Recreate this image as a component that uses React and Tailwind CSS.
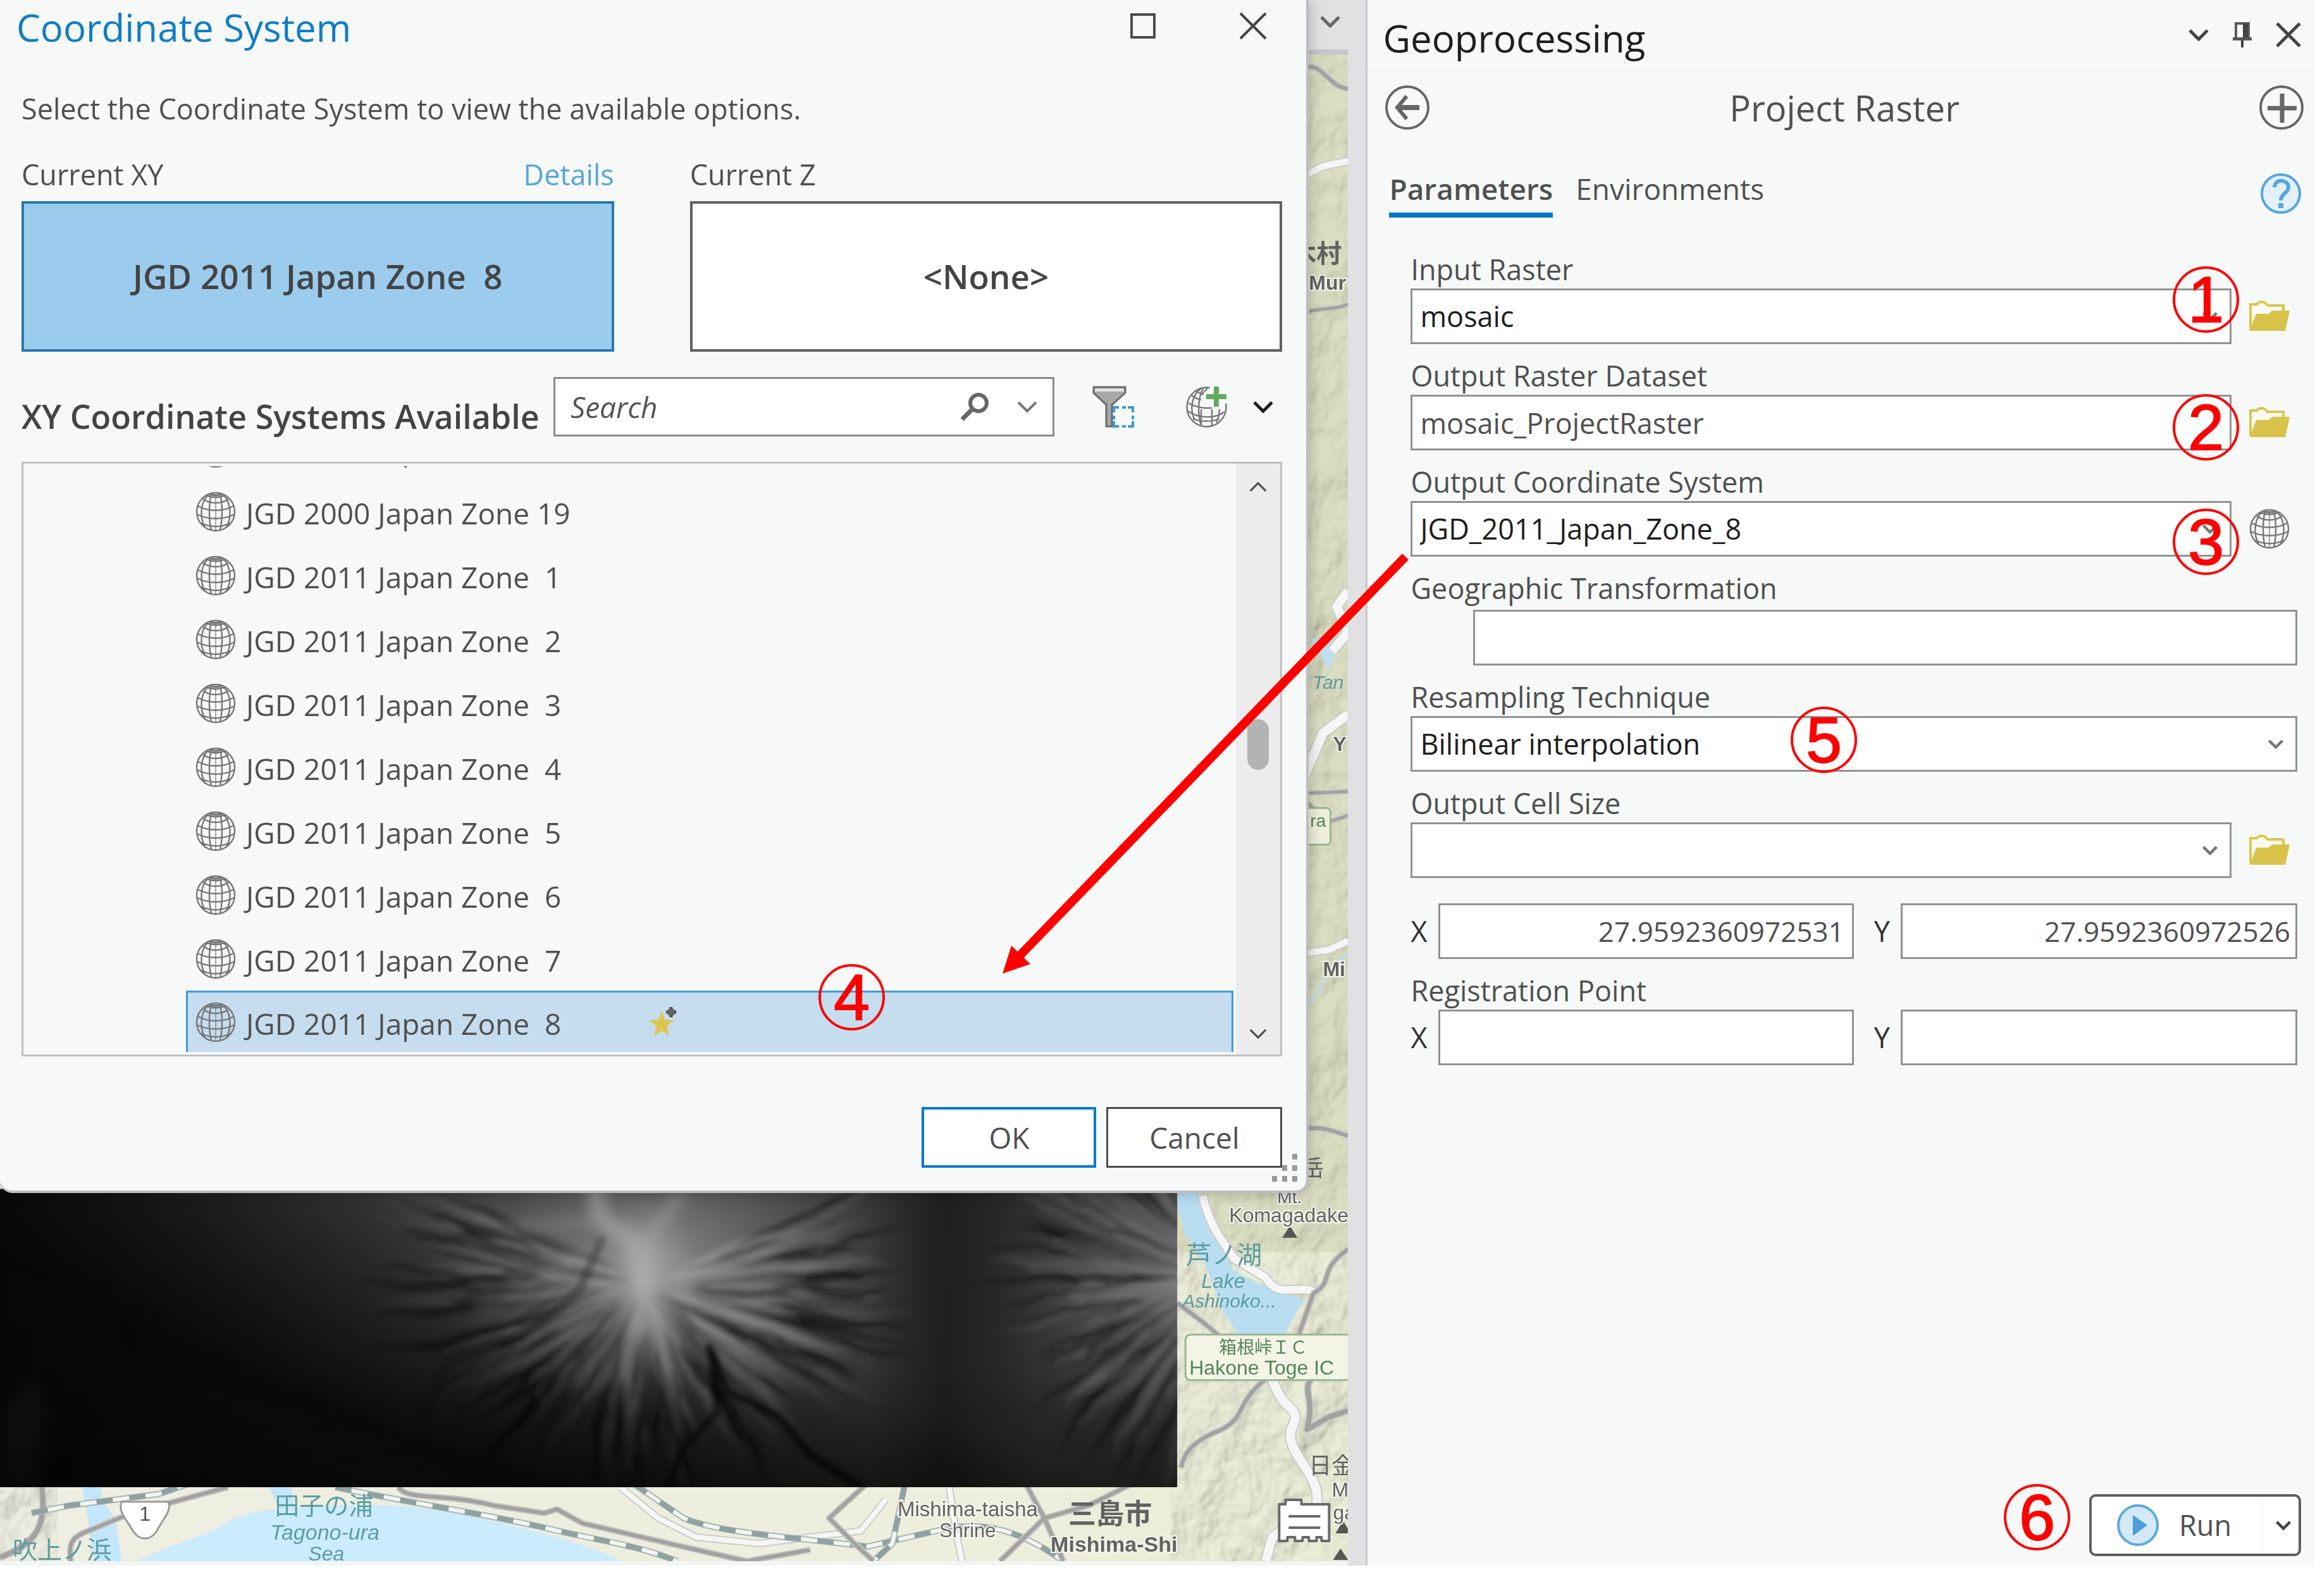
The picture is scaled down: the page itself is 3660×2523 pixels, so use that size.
import React from "react";

function Chevron({ className, up = false, strokeWidth = 4 }) {
  return (
    <svg viewBox="0 0 32 20" className={className} fill="none" stroke="currentColor" strokeWidth={strokeWidth} aria-hidden="true">
      <path d={up ? "M2 17 16 3 30 17" : "M2 3 16 17 30 3"} />
    </svg>
  );
}

function Globe({ className }) {
  return (
    <svg viewBox="0 0 64 64" className={className} fill="none" stroke="#777" strokeWidth="2.4" aria-hidden="true">
      <circle cx="32" cy="32" r="30" />
      <path d="M32 4v58" strokeWidth="1.2" />
      <path d="M25 5C21 20 21 44 25 61M39 5c4 15 4 39 0 56" />
      <path d="M19 6C7 20 7 42 15 56M45 6c12 14 12 36 4 50" />
      <path d="M12 12c12 8 28 8 40 0M4 23c16 9 40 9 56 0M2 36c18 9 42 9 60 0M9 50c14 7 32 7 46 0" />
      <path d="M18 6c8 4 20 4 28 0M22 4c6 2 14 2 20 0" strokeWidth="3" />
    </svg>
  );
}

function GlobeAdd({ className }) {
  return (
    <svg viewBox="0 0 66 68" className={className} fill="none" stroke="#777" strokeWidth="2.4" aria-hidden="true">
      <path d="M38 4A31 31 0 1 0 63 29" />
      <path d="M27 5C19 20 18 46 24 63M24 5C8 16 6 40 14 55" />
      <path d="M9 16c5 4 9 6 15 7M4 28c8 5 16 7 25 8h12M3 41c16 11 42 13 58 1M11 53c12 5 30 5 42 0" />
      <path d="M24 38v27M41 38v27M53 38c0 8-2 15-5 21M16 10l12 5M34 5l-8 8" />
      <path d="M48 2v32M32 18h32" stroke="#63aa60" strokeWidth="8" />
    </svg>
  );
}

function Folder() {
  return (
    <svg viewBox="0 0 64 50" className="h-[50px] w-16" aria-hidden="true">
      <path d="M2 46V6h10c3-5 12-5 15 0 1 2 3 2 5 2h22v12" fill="#fbfaf0" stroke="#dbc64e" strokeWidth="4" />
      <path d="M1 48 11 21h20l5-5h28l-7 32Z" fill="#d8c24a" />
    </svg>
  );
}

function FilterIcon() {
  return (
    <svg viewBox="0 0 66 66" className="h-[66px] w-[66px]" aria-hidden="true">
      <path d="M2 2h50v9L31 30v34h-9V30L2 11Z" fill="#a8a8a8" stroke="#6b6b6b" strokeWidth="3" />
      <path d="M4 4h46v5H4Z" fill="#e3e3e3" />
      <rect x="34" y="34" width="30" height="30" fill="#f7f9f8" />
      <path d="M34 42v-8h8M47 34h6M56 34h8v8M64 47v6M64 56v8h-8M53 64h-6M42 64h-8v-8M34 53v-6" fill="none" stroke="#3a9ad9" strokeWidth="4" />
    </svg>
  );
}

/* Seeded generator so the terrain is drawn the same way each time. */
function makeRandom(seed) {
  let s = seed;
  return () => {
    s = (s * 16807) % 2147483647;
    return s / 2147483647;
  };
}

function ridges(seed, cx, cy, count, from, to, rMin, rMax, squash) {
  const rnd = makeRandom(seed);
  const out = [];
  for (let i = 0; i < count; i++) {
    let a = from + ((to - from) * (i + rnd() * 0.8)) / count;
    const len = rMin + rnd() * (rMax - rMin);
    const start = 30 + rnd() * 170;
    const steps = 9;
    const w = 4 + rnd() * 6;
    const left = [];
    const right = [];
    for (let k = 0; k <= steps; k++) {
      const r = start + ((len - start) * k) / steps;
      a += (rnd() - 0.5) * 0.06;
      const half = w * Math.sin((Math.PI * (k + 0.2)) / (steps + 0.4));
      const nx = -Math.sin(a) * half;
      const ny = Math.cos(a) * half;
      const x = cx + Math.cos(a) * r;
      const y = cy + Math.sin(a) * r * squash;
      left.push(Math.round(x + nx) + " " + Math.round(y + ny));
      right.unshift(Math.round(x - nx) + " " + Math.round(y - ny));
    }
    out.push({ d: "M" + left.concat(right).join("L") + "Z", light: i % 2 === 0 });
  }
  return out;
}

const PEAK = ridges(77, 1020, 2030, 130, -0.5, 3.7, 240, 470, 0.78);
const EAST = ridges(31, 1930, 2020, 70, 1.7, 4.2, 220, 420, 0.9);

function Terrain() {
  return (
    <g clipPath="url(#rasterClip)">
      <rect x="0" y="1880" width="1860" height="471" fill="#050505" />
      <rect x="0" y="1880" width="1860" height="471" fill="url(#plain)" />
      <rect x="0" y="1880" width="1860" height="471" fill="url(#peak)" />
      <rect x="0" y="1880" width="1860" height="471" fill="url(#peakCore)" />
      <rect x="0" y="1880" width="1860" height="471" fill="url(#east)" />
      <g filter="url(#soft)">
        {PEAK.map((p, i) => (
          <path key={i} d={p.d} fill={p.light ? "url(#lightFade)" : "url(#darkFade)"} />
        ))}
        {EAST.map((p, i) => (
          <path key={i} d={p.d} fill={p.light ? "#8a8a8a" : "#0c0c0c"} fillOpacity={p.light ? 0.2 : 0.35} />
        ))}
      </g>
      <g filter="url(#soft)" fill="none" strokeLinejoin="round" strokeLinecap="round">
        <path d="M950 1960 915 2040 860 2090 800 2120 710 2150 690 2190 670 2240" stroke="#161616" strokeOpacity=".45" strokeWidth="10" />
        <path d="M1120 2130 1150 2200 1230 2240 1280 2300 1360 2351" stroke="#080808" strokeOpacity=".7" strokeWidth="12" />
        <path d="M1125 2140 1135 2230 1080 2290 1055 2351" stroke="#050505" strokeOpacity=".6" strokeWidth="10" />
      </g>
      <g filter="url(#softer)" fill="none" strokeLinejoin="round" strokeLinecap="round">
        <path d="M940 1875 950 1930 1000 1960 1020 2030 1005 2100" stroke="#b4b4b4" strokeOpacity=".55" strokeWidth="26" />
        <path d="M1075 1890 1030 1950 1020 2010 1090 2040" stroke="#aaa" strokeOpacity=".45" strokeWidth="18" />
        <path d="M950 1930 880 1935 800 1945M1020 1990 1150 2015 1270 2030M930 1980 850 2030 760 2060" stroke="#999" strokeOpacity=".32" strokeWidth="20" />
        <path d="M0 2010 60 2030 130 2030 170 2090 200 2140 160 2180 120 2200 90 2160 45 2140 60 2080 30 2100 0 2070Z" fill="#242424" />
        <path d="M50 2170 75 2230 60 2351H0V2240Z" fill="#383838" />
      </g>
      <rect x="0" y="1880" width="1860" height="471" fill="url(#valley)" />
      <rect x="0" y="1880" width="1860" height="471" fill="url(#southFade)" />
      <rect x="0" y="1880" width="1860" height="471" fill="url(#bottomFade)" />
    </g>
  );
}

function Rail({ d }) {
  return (
    <g fill="none">
      <path d={d} stroke="#a9b5b4" strokeWidth="10" />
      <path d={d} stroke="#f2f5f2" strokeWidth="6" />
      <path d={d} stroke="#8fa2a1" strokeWidth="8" strokeDasharray="26 26" />
    </g>
  );
}

function Road({ d, white = false, w = 8 }) {
  return (
    <g fill="none" strokeLinejoin="round">
      <path d={d} stroke={white ? "#cbccc8" : "#c9c9c5"} strokeWidth={w + 4} />
      <path d={d} stroke={white ? "#f6f6f6" : "#a3a1a1"} strokeWidth={w} />
    </g>
  );
}

function MapView() {
  const sans = '"Liberation Sans", Arial, sans-serif';
  const jp = '"Noto Sans CJK JP", sans-serif';
  return (
    <svg viewBox="0 0 2130 2468" preserveAspectRatio="xMaxYMax slice" className="h-full w-full" role="img" aria-label="Map of Numazu, Mishima and Hakone">
      <defs>
        <clipPath id="rasterClip"><rect x="0" y="1880" width="1860" height="471" /></clipPath>
        <filter id="relief" x="0" y="0" width="100%" height="100%">
          <feTurbulence type="fractalNoise" baseFrequency="0.013 0.011" numOctaves="4" seed="8" result="n" />
          <feDiffuseLighting in="n" surfaceScale="26" lightingColor="#ffffff">
            <feDistantLight azimuth="225" elevation="52" />
          </feDiffuseLighting>
        </filter>
        <filter id="soft" x="-5%" y="-5%" width="110%" height="110%"><feGaussianBlur stdDeviation="4" /></filter>
        <filter id="softer" x="-10%" y="-10%" width="120%" height="120%"><feGaussianBlur stdDeviation="11" /></filter>
        <radialGradient id="peak" gradientUnits="userSpaceOnUse" cx="0" cy="0" r="1" gradientTransform="translate(1030 1990) scale(560 360)">
          <stop offset="0" stopColor="#8c8c8c" />
          <stop offset=".3" stopColor="#646464" stopOpacity=".9" />
          <stop offset=".65" stopColor="#3c3c3c" stopOpacity=".75" />
          <stop offset="1" stopColor="#2a2a2a" stopOpacity="0" />
        </radialGradient>
        <radialGradient id="peakCore" gradientUnits="userSpaceOnUse" cx="0" cy="0" r="1" gradientTransform="translate(1015 2020) scale(90 130)">
          <stop offset="0" stopColor="#b4b4b4" stopOpacity=".7" />
          <stop offset="1" stopColor="#999" stopOpacity="0" />
        </radialGradient>
        <radialGradient id="east" gradientUnits="userSpaceOnUse" cx="0" cy="0" r="1" gradientTransform="translate(1870 2020) scale(360 330)">
          <stop offset="0" stopColor="#808080" />
          <stop offset=".4" stopColor="#505050" stopOpacity=".9" />
          <stop offset="1" stopColor="#2a2a2a" stopOpacity="0" />
        </radialGradient>
        <radialGradient id="lightFade" gradientUnits="userSpaceOnUse" cx="1020" cy="2030" r="440">
          <stop offset="0" stopColor="#c4c4c4" stopOpacity=".5" />
          <stop offset="1" stopColor="#666" stopOpacity=".1" />
        </radialGradient>
        <radialGradient id="darkFade" gradientUnits="userSpaceOnUse" cx="1020" cy="2030" r="440">
          <stop offset="0" stopColor="#333" stopOpacity=".25" />
          <stop offset=".5" stopColor="#0b0b0b" stopOpacity=".5" />
          <stop offset="1" stopColor="#000" stopOpacity=".3" />
        </radialGradient>
        <linearGradient id="plain" gradientUnits="userSpaceOnUse" x1="0" y1="1880" x2="1860" y2="1880">
          <stop offset="0" stopColor="#121212" />
          <stop offset=".35" stopColor="#383838" />
          <stop offset="1" stopColor="#2a2a2a" />
        </linearGradient>
        <linearGradient id="valley" gradientUnits="userSpaceOnUse" x1="1370" y1="0" x2="1640" y2="0">
          <stop offset="0" stopColor="#141414" stopOpacity="0" />
          <stop offset=".45" stopColor="#141414" stopOpacity=".6" />
          <stop offset="1" stopColor="#141414" stopOpacity="0" />
        </linearGradient>
        <linearGradient id="southFade" gradientUnits="userSpaceOnUse" x1="620" y1="1900" x2="480" y2="2260">
          <stop offset="0" stopColor="#000" stopOpacity="0" />
          <stop offset=".9" stopColor="#000" stopOpacity=".8" />
          <stop offset="1" stopColor="#000" stopOpacity=".74" />
        </linearGradient>
        <linearGradient id="bottomFade" gradientUnits="userSpaceOnUse" x1="0" y1="2160" x2="0" y2="2351">
          <stop offset="0" stopColor="#000" stopOpacity="0" />
          <stop offset="1" stopColor="#000" stopOpacity=".35" />
        </linearGradient>
        <linearGradient id="flat" x1="0" x2="1" y1="0" y2="0">
          <stop offset="0" stopColor="#eeeee2" />
          <stop offset=".7" stopColor="#eeeedd" />
          <stop offset="1" stopColor="#ebedd6" />
        </linearGradient>
      </defs>

      <rect width="2130" height="2468" fill="url(#flat)" />
      <g className="mix-blend-multiply">
        <rect x="1850" y="80" width="280" height="2388" filter="url(#relief)" opacity=".3" />
        <rect x="0" y="2351" width="90" height="117" filter="url(#relief)" opacity=".3" />
      </g>
      <rect x="1850" y="80" width="280" height="1900" fill="#c9cba8" fillOpacity=".4" />

      {/* Coast and lake */}
      <path d="M217 2468C270 2440 320 2430 350 2412 380 2388 440 2384 491 2382 560 2378 620 2378 666 2384 730 2392 790 2408 842 2420 900 2436 950 2450 982 2468Z" fill="#cbebff" />
      <path d="M130 2351 142 2420 150 2468H192L182 2400 160 2370 160 2351ZM425 2351 440 2385H465L460 2351Z" fill="#c3e6fb" />
      <path d="M1855 1885H1892L1918 1950 1949 2009 1987 2028 2060 2055 2026 2117H1960L1930 2068 1903 1996 1872 1950Z" fill="#b9def2" />

      {/* Roads and railways, south */}
      <Road d="M66 2351C74 2410 60 2440 0 2462" />
      <Road d="M112 2468C108 2440 112 2430 140 2420L200 2395 290 2370 360 2351" w={6} />
      <Rail d="M50 2392 110 2380 250 2362 300 2345" />
      <Rail d="M530 2351C640 2375 760 2392 860 2415 940 2435 1000 2440 1070 2468" />
      <Road d="M630 2351C640 2372 700 2360 780 2380L860 2392 880 2386 920 2408 1100 2450 1180 2468 1280 2450" w={6} />
      <Road d="M980 2351 1040 2400 1100 2430 1200 2440 1360 2420 1400 2370" white w={8} />
      <Rail d="M1000 2345 1080 2400C1140 2425 1260 2430 1370 2445L1480 2420C1540 2405 1600 2410 1680 2468" />
      <Rail d="M1430 2345 1410 2440 1380 2468" />
      <Road d="M1370 2345 1310 2400 1350 2440 1380 2468" w={6} />
      <Road d="M1500 2351 1510 2420 1520 2468" white w={8} />
      <Road d="M1620 2345 1650 2400 1580 2468M1650 2400 1720 2380 1790 2345M1650 2400 1680 2468" w={6} />

      {/* Roads, east */}
      <Road d="M2060 110C2085 95 2100 140 2130 142" w={6} />
      <Road d="M2060 282C2090 258 2110 262 2130 256" white w={10} />
      <Road d="M2060 496C2090 486 2110 492 2130 482" w={5} />
      <path d="M2070 1010h50l-20 50Z" fill="#bfdfee" />
      <Road d="M2130 935 2112 960 2130 1000 2105 1030M2130 1130 2090 1160 2060 1230" white w={14} />
      <Road d="M2060 1255 2130 1252M2060 1265 2100 1300 2130 1290" w={5} />
      <Road d="M2060 1508 2100 1502 2130 1488" white w={10} />
      <Road d="M2060 1785C2090 1780 2110 1790 2130 1796" w={6} />
      <path d="M2065 1590C2090 1570 2090 1530 2130 1510" stroke="#bcdcea" strokeWidth="4" fill="none" />
      <Road d="M1900 1891C1912 1940 1930 1960 1950 1990L2000 2020C2020 2055 2050 2030 2075 2042" white w={12} />
      <Road d="M2130 1975C2080 2010 2110 2025 2075 2045L2045 2130 2000 2180C1950 2220 1970 2240 1930 2260 1880 2280 1870 2300 1866 2320" w={6} />
      <Road d="M1860 2060 1900 2090 1960 2140 2130 2128" w={6} />
      <Road d="M2080 2170C2050 2200 2080 2200 2065 2260L2100 2240 2130 2230" w={8} />
      <Road d="M2010 2180C2030 2240 2060 2220 2040 2260 2030 2300 2090 2330 2080 2380L2010 2430 2000 2468" white w={14} />

      <Terrain />

      {/* Highway shield and summit markers */}
      <path d="M192 2374H266C272 2390 256 2402 248 2420 238 2436 220 2436 210 2420 200 2402 186 2390 192 2374Z" fill="#fff" stroke="#9a9a9a" strokeWidth="3" />
      <text x="229" y="2404" fontSize="32" fontFamily={sans} fill="#555" textAnchor="middle">1</text>
      <g fill="#555">
        <path d="M2038 1938 2050 1957H2026ZM2122 2404 2134 2424H2110ZM2118 2448 2130 2466H2106Z" />
      </g>

      <g fontFamily={jp} fill="#5d9da0">
        <text x="434" y="2394" fontSize="39">田子の浦</text>
        <text x="20" y="2464" fontSize="39">吹上ノ浜</text>
        <text x="1874" y="1998" fontSize="40">芦ノ湖</text>
      </g>
      <g fontFamily={sans} fontStyle="italic" fill="#5d9da0">
        <text x="427" y="2434" fontSize="34">Tagono-ura</text>
        <text x="487" y="2467" fontSize="32">Sea</text>
        <text x="1898" y="2036" fontSize="32">Lake</text>
        <text x="1868" y="2067" fontSize="30">Ashinoko...</text>
        <text x="2074" y="1090" fontSize="30">Tan</text>
      </g>
      <g fontFamily={sans} fill="#626262" stroke="#f4f4ec" strokeWidth="4" paintOrder="stroke">
        <text x="1418" y="2397" fontSize="33">Mishima-taisha</text>
        <text x="1484" y="2430" fontSize="31">Shrine</text>
        <text x="1660" y="2453" fontSize="34" fontWeight="700">Mishima-Shi</text>
        <text x="2018" y="1902" fontSize="28">Mt.</text>
        <text x="1942" y="1932" fontSize="32">Komagadake</text>
        <text x="2068" y="459" fontSize="32" fontWeight="700">Mur</text>
        <text x="2090" y="1544" fontSize="32" fontWeight="700">Mi</text>
        <text x="2106" y="1188" fontSize="32" fontWeight="700">Y</text>
        <text x="2104" y="2366" fontSize="32">M</text>
        <text x="2106" y="2402" fontSize="32">ga</text>
      </g>
      <g fontFamily={jp} fill="#626262">
        <text x="1688" y="2409" fontSize="44" fontWeight="700">三島市</text>
        <text x="2040" y="416" fontSize="40" fontWeight="700">木村</text>
        <text x="2056" y="1860" fontSize="36">岳</text>
        <text x="2068" y="2330" fontSize="36">日金</text>
      </g>
      <rect x="1873" y="2110" width="300" height="72" rx="8" fill="#f3f4e6" stroke="#9bb592" strokeWidth="3" />
      <rect x="2040" y="1278" width="62" height="58" rx="6" fill="#eef0dc" stroke="#9bb592" strokeWidth="3" />
      <g fill="#54855a">
        <text x="1926" y="2140" fontSize="28" fontFamily={jp}>箱根峠ＩＣ</text>
        <text x="1879" y="2173" fontSize="32" fontFamily={sans}>Hakone Toge IC</text>
        <text x="2070" y="1308" fontSize="28" fontFamily={sans}>ra</text>
      </g>

      {/* Map notes glyph */}
      <g stroke="#6a6a6a" strokeWidth="4" fill="#fff" strokeLinejoin="round">
        <path d="M2021 2436V2378H2031V2371H2056V2378H2100V2436H2088V2430H2080V2436H2068V2430H2058V2436H2046V2430H2034V2436Z" />
        <path d="M2036 2397H2086M2036 2415H2086" />
      </g>
    </svg>
  );
}

const SYSTEMS = [
  "JGD 2000 Japan Zone 18",
  "JGD 2000 Japan Zone 19",
  "JGD 2011 Japan Zone  1",
  "JGD 2011 Japan Zone  2",
  "JGD 2011 Japan Zone  3",
  "JGD 2011 Japan Zone  4",
  "JGD 2011 Japan Zone  5",
  "JGD 2011 Japan Zone  6",
  "JGD 2011 Japan Zone  7",
  "JGD 2011 Japan Zone  8",
];

function SystemRow({ name, selected }) {
  return (
    <li role="option" aria-selected={selected} className="shrink-0">
      <button
        type="button"
        className={
          selected
            ? "flex h-[97px] w-full items-center border-x-[3px] border-t-[3px] border-[#3d9bd5] bg-[#c6dcef] pl-3"
            : "flex h-[101px] w-full items-center pl-[15px]"
        }
      >
        <Globe className="h-16 w-16" />
        <span className="whitespace-pre pt-1 pl-4 text-[46px] leading-[60px]">{name}</span>
        {selected && (
          <svg viewBox="0 0 46 48" className="ml-[138px] h-12 w-[46px]" aria-label="Favorite">
            <path d="M21 6 26 20 41 21 29 30 33 46 21 37 9 46 13 30 1 21 16 20Z" fill="#dcc64c" />
            <path d="M36 0v16M28 8h16" stroke="#4a4a4a" strokeWidth="5" />
            <path d="M31 3h10v10H31Z" fill="#666" />
          </svg>
        )}
      </button>
    </li>
  );
}

function CoordinateDialog() {
  return (
    <section
      role="dialog"
      aria-label="Coordinate System"
      className="absolute top-0 right-[62px] left-0 rounded-b-[20px] border-r-4 border-b-4 border-[#bdbdc1] bg-[#f7f9f8] pr-[38px] pb-9 pl-[34px] shadow-[0_0_24px_rgba(0,0,0,0.25)]"
    >
      <header className="-ml-2 flex h-[86px] items-center justify-between">
        <h1 className="text-[60px] leading-[80px] text-[#0f7dc7]">Coordinate System</h1>
        <div className="flex items-center gap-[132px] pr-6 pb-1 text-[#444]">
          <button type="button" aria-label="Maximize" className="h-10 w-10 border-4 border-[#4a4a4a]" />
          <button type="button" aria-label="Close">
            <svg viewBox="0 0 44 44" className="h-11 w-11" stroke="currentColor" strokeWidth="4" aria-hidden="true">
              <path d="M2 2 42 42M42 2 2 42" />
            </svg>
          </button>
        </div>
      </header>

      <p className="mt-14 text-[45px] leading-[60px]">Select the Coordinate System to view the available options.</p>

      <div className="mt-11 grid grid-cols-2 gap-x-[120px]">
        <div>
          <div className="flex justify-between text-[45px] leading-[60px]">
            <span>Current XY</span>
            <a href="#details" className="text-[#55a6de]">Details</a>
          </div>
          <button type="button" className="mt-3 flex h-[238px] w-full items-center justify-center border-4 border-[#2878ad] bg-[#9ccced] text-[53px] font-semibold whitespace-pre text-[#444]">
            {"JGD 2011 Japan Zone  8"}
          </button>
        </div>
        <div>
          <div className="text-[45px] leading-[60px]">Current Z</div>
          <button type="button" className="mt-3 flex h-[238px] w-full items-center justify-center border-4 border-[#606060] bg-white text-[53px] font-semibold text-[#444]">
            &lt;None&gt;
          </button>
        </div>
      </div>

      <div className="mt-10 flex items-center">
        <h2 className="min-w-[841px] shrink-0 self-end pb-0.5 text-[52px] leading-[60px] font-semibold text-[#444]">XY Coordinate Systems Available</h2>
        <div className="flex h-[94px] w-[792px] items-center border-[3px] border-[#8a8a8a] bg-white pr-6 pl-6">
          <input aria-label="Search" placeholder="Search" className="min-w-0 flex-1 text-[46px] italic outline-none placeholder:text-[#555]" />
          <button type="button" aria-label="Search">
            <svg viewBox="0 0 46 46" className="h-[46px] w-[46px]" fill="none" stroke="#666" strokeWidth="6" aria-hidden="true">
              <circle cx="29" cy="17" r="13" />
              <path d="M20 26 3 43" strokeWidth="7" />
            </svg>
          </button>
          <button type="button" aria-label="Search options" className="ml-11 text-[#777]">
            <Chevron className="h-5 w-8" />
          </button>
        </div>
        <button type="button" aria-label="Filter" className="ml-[60px]"><FilterIcon /></button>
        <button type="button" aria-label="Add coordinate system" className="ml-[82px]"><GlobeAdd className="h-[68px] w-[66px]" /></button>
        <button type="button" aria-label="Add options" className="ml-10 text-[#1e1e1e]"><Chevron className="h-5 w-8" strokeWidth={5} /></button>
      </div>

      <div className="mt-10 flex h-[940px] border-[3px] border-[#bfc0c4]">
        <div className="my-1 flex min-w-0 flex-1 flex-col justify-end overflow-hidden pl-[257px]">
          <ul role="listbox" aria-label="XY coordinate systems" className="flex h-full flex-col justify-end">
            {SYSTEMS.map((name, i) => (
              <SystemRow key={name} name={name} selected={i === SYSTEMS.length - 1} />
            ))}
          </ul>
        </div>
        <div className="ml-1 flex w-[70px] flex-col items-center bg-[#ececec] pt-7 pb-6 text-[#555]">
          <Chevron up className="h-[18px] w-7" />
          <div className="mt-[358px] h-20 w-[34px] rounded-full bg-[#b3b3b3]" />
          <Chevron className="mt-auto h-[18px] w-7" />
        </div>
      </div>

      <div className="mt-20 flex justify-end gap-4 text-[46px] leading-[60px]">
        <button type="button" className="h-24 w-[276px] border-4 border-[#0a78d0] bg-white">OK</button>
        <button type="button" className="h-24 w-[278px] border-[3px] border-[#4a4a4a] bg-white">Cancel</button>
      </div>

      <svg viewBox="0 0 40 44" className="absolute right-3.5 bottom-3.5 h-11 w-10" fill="#9899a0" aria-hidden="true">
        <path d="M32 0h8v9h-8ZM16 18h8v9h-8ZM32 18h8v9h-8ZM0 35h8v9H0ZM16 35h8v9h-8ZM32 35h8v9h-8Z" />
      </svg>
    </section>
  );
}

const BOX = "h-[88px] w-full appearance-none rounded-none border-[3px] border-[#919191] bg-white px-3 text-[45px] outline-none";

function Select({ id, value }) {
  return (
    <div className="relative min-w-0 flex-1">
      <select id={id} defaultValue={value} className={BOX + " text-[#1e1e1e]"}>
        <option value={value}>{value}</option>
      </select>
      <Chevron className="pointer-events-none absolute top-9 right-[22px] h-4 w-6 text-[#777]" strokeWidth={6} />
    </div>
  );
}

function Field({ id, label, children }) {
  return (
    <div>
      <label htmlFor={id} className="block pt-5 text-[45px] leading-[60px]">{label}</label>
      <div className="flex items-center gap-7">{children}</div>
    </div>
  );
}

function SideButton({ label, children }) {
  return (
    <button type="button" aria-label={label} className="flex w-[76px] shrink-0 items-center">{children}</button>
  );
}

function XYRow({ prefix, x, y }) {
  return (
    <div className="flex items-center text-[45px]">
      <label htmlFor={prefix + "-x"} className="w-11 text-[#333]">X</label>
      <input id={prefix + "-x"} defaultValue={x} className="h-[88px] min-w-0 flex-[652] border-[3px] border-[#919191] bg-white px-3 text-right text-[44px] outline-none" />
      <label htmlFor={prefix + "-y"} className="ml-8 w-[42px] text-[#333]">Y</label>
      <input id={prefix + "-y"} defaultValue={y} className="h-[88px] min-w-0 flex-[630] border-[3px] border-[#919191] bg-white px-2 text-right text-[44px] outline-none" />
    </div>
  );
}

function GeoprocessingPane() {
  return (
    <aside className="flex w-[41%] flex-col border-l-[3px] border-[#c5c6ca] bg-[#f7f9f8]">
      <header className="flex h-28 items-center justify-between border-b-2 border-[#eff2f1] pr-[22px] pl-6">
        <h2 className="pt-2.5 text-[60px] leading-[80px] text-[#1e1e1e]">Geoprocessing</h2>
        <div className="flex items-center gap-[38px] text-[#444]">
          <button type="button" aria-label="Pane options"><Chevron className="h-5 w-8" strokeWidth={5} /></button>
          <button type="button" aria-label="Auto hide">
            <svg viewBox="0 0 30 40" className="h-10 w-[30px]" aria-hidden="true">
              <path d="M5 2h20v24H5Z" fill="#fff" stroke="#5a5a5a" strokeWidth="4" />
              <path d="M16 2h8v24h-8Z" fill="#444" />
              <path d="M0 24h30v5H0Z" fill="#555" />
              <path d="M15 28v12" stroke="#444" strokeWidth="4" />
            </svg>
          </button>
          <button type="button" aria-label="Close pane">
            <svg viewBox="0 0 40 40" className="h-10 w-10" stroke="currentColor" strokeWidth="5" aria-hidden="true">
              <path d="M2 2 38 38M38 2 2 38" />
            </svg>
          </button>
        </div>
      </header>

      <div className="flex h-[116px] items-center justify-between pr-[18px] pl-7">
        <button type="button" aria-label="Back">
          <svg viewBox="0 0 70 70" className="h-[70px] w-[70px]" fill="none" stroke="#666" aria-hidden="true">
            <circle cx="35" cy="35" r="33" strokeWidth="4" />
            <path d="M34 17 19 35 34 53" strokeWidth="6" />
            <path d="M20 35h34" strokeWidth="8" />
          </svg>
        </button>
        <h3 className="text-[56px] leading-[72px]">Project Raster</h3>
        <button type="button" aria-label="Add to model">
          <svg viewBox="0 0 70 70" className="h-[70px] w-[70px]" fill="none" stroke="#666" aria-hidden="true">
            <circle cx="35" cy="35" r="33" strokeWidth="4" />
            <path d="M36 13v46M13 36h46" strokeWidth="7" />
          </svg>
        </button>
      </div>

      <div className="mt-10 flex items-center pr-[22px] pl-[34px] text-[46px] leading-[60px]">
        <button type="button" className="border-b-8 border-[#0079c8] pb-2 font-semibold">Parameters</button>
        <button type="button" className="ml-9 border-b-8 border-transparent pb-2">Environments</button>
        <button type="button" aria-label="Help" className="ml-auto">
          <svg viewBox="0 0 64 64" className="h-16 w-16" fill="none" stroke="#55a6de" aria-hidden="true">
            <circle cx="32" cy="32" r="30" fill="#e3f0fa" strokeWidth="4" />
            <path d="M22 22c0-14 22-13 22 0 0 9-12 10-12 21" strokeWidth="6" />
            <path d="M32 47v8" strokeWidth="8" />
          </svg>
        </button>
      </div>

      <form className="mt-8 pr-7 pl-[68px]">
        <Field id="input-raster" label="Input Raster">
          <Select id="input-raster" value="mosaic" />
          <SideButton label="Browse input raster"><Folder /></SideButton>
        </Field>
        <Field id="output-raster" label="Output Raster Dataset">
          <input id="output-raster" defaultValue="mosaic_ProjectRaster" className={BOX + " min-w-0 flex-1"} />
          <SideButton label="Browse output raster"><Folder /></SideButton>
        </Field>
        <Field id="output-cs" label="Output Coordinate System">
          <Select id="output-cs" value="JGD_2011_Japan_Zone_8" />
          <SideButton label="Select coordinate system"><Globe className="h-16 w-16" /></SideButton>
        </Field>
        <Field id="geo-transform" label="Geographic Transformation">
          <input id="geo-transform" className={BOX + " mt-1 ml-[99px] min-w-0 flex-1"} />
        </Field>
        <Field id="resampling" label="Resampling Technique">
          <Select id="resampling" value="Bilinear interpolation" />
        </Field>
        <Field id="cell-size" label="Output Cell Size">
          <Select id="cell-size" value="" />
          <SideButton label="Browse cell size"><Folder /></SideButton>
        </Field>
        <div className="mt-10"><XYRow prefix="cell" x="27.9592360972531" y="27.9592360972526" /></div>
        <div className="pt-5 text-[45px] leading-[60px]">Registration Point</div>
        <XYRow prefix="registration" x="" y="" />
      </form>

      <div className="mt-auto mr-[22px] mb-[15px] flex h-[98px] self-end rounded-[10px] border-4 border-[#606060] bg-white">
        <button type="button" className="flex items-center gap-8 border-r-2 border-[#f7f7f7] pr-12 pl-10 text-[45px] leading-[60px]">
          <svg viewBox="0 0 66 66" className="h-[66px] w-[66px]" aria-hidden="true">
            <circle cx="33" cy="33" r="31" fill="#d4e9f8" stroke="#5aa9de" strokeWidth="4" />
            <path d="M25 17v33l23-17Z" fill="#4c9fd8" />
          </svg>
          Run
        </button>
        <button type="button" aria-label="Run options" className="flex items-center pr-3 pl-5 text-[#444]">
          <Chevron className="h-4 w-6" strokeWidth={6} />
        </button>
      </div>
    </aside>
  );
}

/* Numbered call-outs pinned over the windows. */
const STEPS = [
  { n: 1, left: 3435, top: 421 },
  { n: 2, left: 3435, top: 623 },
  { n: 3, left: 3435, top: 804 },
  { n: 4, left: 1294, top: 1524 },
  { n: 5, left: 2831, top: 1117 },
  { n: 6, left: 3168, top: 2346 },
];

function Callouts() {
  return (
    <div className="pointer-events-none absolute inset-0 overflow-hidden">
      <svg viewBox="0 0 660 690" className="absolute top-[860px] left-[1575px] h-[690px] w-[660px]" fill="#ff0000" aria-hidden="true">
        <path d="M647 20 34 654" stroke="#ff0000" strokeWidth="14" />
        <path d="M10 679 24 635 54 664Z" />
      </svg>
      {STEPS.map((s) => (
        <span
          key={s.n}
          style={{ left: s.left, top: s.top }}
          className="absolute flex h-[105px] w-[105px] items-center justify-center rounded-full border-4 border-[#ff0000] font-['Liberation_Sans',Arial,sans-serif] text-[102px] leading-none text-[#ff0000] [-webkit-text-stroke:2px_#ff0000]"
        >
          {s.n}
        </span>
      ))}
    </div>
  );
}

export default function App() {
  return (
    <div className="relative flex min-h-screen flex-col bg-white pb-12 font-['Open_Sans','Noto_Sans',sans-serif] text-[#505050]">
      <main className="flex flex-1">
        <div className="relative flex min-w-0 flex-1 flex-col bg-[#e1e1e3] pr-7">
          <div className="flex h-[86px] justify-end border-b-[8px] border-[#c6c8cc] pt-6 pr-3 text-[#666]">
            <button type="button" aria-label="Views" className="self-start"><Chevron className="h-5 w-8" strokeWidth={5} /></button>
          </div>
          <div className="relative flex-1 border-b-[7px] border-[#f3f5f4]">
            <div className="absolute inset-0"><MapView /></div>
          </div>
          <div className="absolute inset-0 pr-7">
            <div className="relative h-full">
              <CoordinateDialog />
            </div>
          </div>
        </div>
        <GeoprocessingPane />
      </main>
      <Callouts />
    </div>
  );
}
